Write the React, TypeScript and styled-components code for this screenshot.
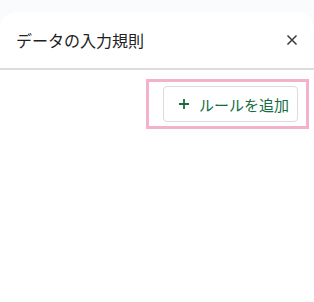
import styled, { createGlobalStyle } from 'styled-components';

const GlobalStyle = createGlobalStyle`
  html, body {
    margin: 0;
    padding: 0;
    background: #f9fbfd;
    font-family: "Noto Sans CJK JP", "Noto Sans", sans-serif;
  }
`;

const Page = styled.div`
  width: 314px;
  height: 302px;
  padding-top: 12px;
  box-sizing: border-box;
`;

const Panel = styled.div`
  background: #fff;
  height: 100%;
  border-radius: 16px 16px 0 0;
  display: flex;
  flex-direction: column;
`;

const Header = styled.div`
  display: flex;
  align-items: center;
  justify-content: space-between;
  height: 56px;
  padding: 0 10px 0 16px;
  border-bottom: 2px solid #dadce0;
`;

const Title = styled.h2`
  margin: 0;
  font-size: 16px;
  font-weight: 400;
  color: #202124;
`;

const CloseButton = styled.button`
  border: none;
  background: none;
  padding: 4px;
  display: flex;
  cursor: pointer;
`;

const Body = styled.div`
  display: flex;
  justify-content: flex-end;
  padding: 9px 5px 0 0;
`;

const Highlight = styled.div`
  width: 163px;
  box-sizing: border-box;
  border: 3px solid #f4b1cb;
  padding: 4px 8px 4px 14px;
`;

const AddButton = styled.button`
  display: flex;
  align-items: center;
  gap: 9px;
  width: 100%;
  height: 36px;
  padding: 0 0 0 14px;
  background: #fff;
  border: 1px solid #dadce0;
  border-radius: 4px;
  color: #146c43;
  font-family: "Noto Sans CJK JP", "Noto Sans", sans-serif;
  font-size: 15px;
  cursor: pointer;
`;

export default function App() {
  return (
    <Page>
      <GlobalStyle />
      <Panel>
        <Header>
          <Title>データの入力規則</Title>
          <CloseButton aria-label="閉じる">
            <svg width="16" height="16" viewBox="0 0 16 16">
              <path d="M3.5 3.5 L12.5 12.5 M12.5 3.5 L3.5 12.5" stroke="#3c4043" strokeWidth="1.6" />
            </svg>
          </CloseButton>
        </Header>
        <Body>
          <Highlight>
            <AddButton>
              <svg width="12" height="12" viewBox="0 0 12 12">
                <path d="M6 1 V11 M1 6 H11" stroke="#146c43" strokeWidth="1.8" />
              </svg>
              ルールを追加
            </AddButton>
          </Highlight>
        </Body>
      </Panel>
    </Page>
  );
}
